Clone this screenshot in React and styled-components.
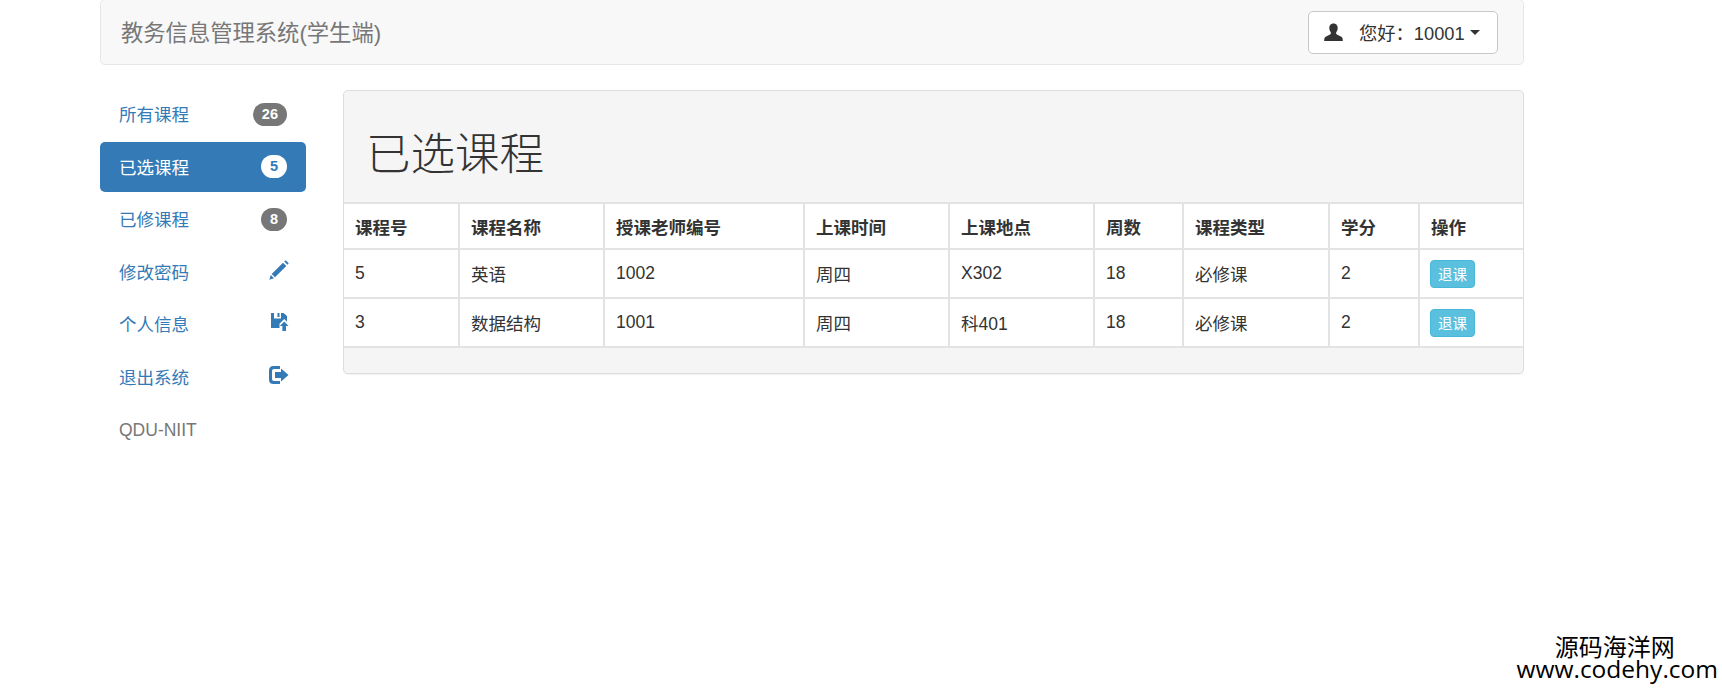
import React from "react";
import styled, { createGlobalStyle } from "styled-components";

const GlobalStyle = createGlobalStyle`
    html, body {
        margin: 0;
        padding: 0;
        background: #fff;
    }
    body {
        font-family: "Liberation Sans", "Noto Sans CJK SC", sans-serif;
        font-size: 17.5px;
        color: #333;
    }
`;

const columns = [
    { title: "课程号", width: 115 },
    { title: "课程名称", width: 145 },
    { title: "授课老师编号", width: 200 },
    { title: "上课时间", width: 145 },
    { title: "上课地点", width: 145 },
    { title: "周数", width: 89 },
    { title: "课程类型", width: 146 },
    { title: "学分", width: 90 },
    { title: "操作" },
];

const courses = [
    ["5", "英语", "1002", "周四", "X302", "18", "必修课", "2"],
    ["3", "数据结构", "1001", "周四", "科401", "18", "必修课", "2"],
];

const UserIcon = () => (
    <svg width="19" height="19" viewBox="0 0 19 19" fill="#333">
        <path d="M9.5 0.5c2.9 0 4.4 2.2 4.2 5-.1 1.500-.6 2.700-1.300 3.600-.5.7-.4 1.800.4 2.300 1 .6 4.200 1.700 5.200 2.900.6.8.8 2.200.8 3.700H.2c0-1.500.2-2.900.8-3.700 1-1.200 4.200-2.300 5.200-2.900.8-.5.9-1.600.4-2.300C5.900 8.200 5.400 7 5.300 5.500c-.2-2.800 1.300-5 4.200-5z" />
    </svg>
);

const PencilIcon = () => (
    <svg width="20" height="20" viewBox="0 0 20 20" fill="#337ab7">
        <path d="M15.200 1.500l1.500-1.200 3 3-1.200 1.500zM14 2.700l3.300 3.300L6 17.300 2.700 14zM1.800 15l3.200 3.200L0.300 19.700z" />
    </svg>
);

const FloppyOpenIcon = () => (
    <svg width="18" height="18" viewBox="0 0 18 18" fill="#337ab7">
        <path d="M0 0h3v5.500h7V0h2.500L16 3v5.800l-2.800-2.900-4.700 4.800v4.300H0zM6.500 0h2v4h-2z" />
        <path d="M13.200 8.600l4.300 4.400h-2.500v5h-3.600v-5H8.900z" />
    </svg>
);

const LogOutIcon = () => (
    <svg width="20" height="18" viewBox="0 0 20 18" fill="#337ab7">
        <path d="M4.500 0H11v3H5Q3 3 3 5v8q0 2 2 2h6v3H4.500Q0 18 0 13.500v-9Q0 0 4.500 0z" />
        <path d="M6 6h6V2.500L19.500 9 12 15.500V12H6z" />
    </svg>
);

const menu = [
    { label: "所有课程", badge: "26" },
    { label: "已选课程", badge: "5", active: true },
    { label: "已修课程", badge: "8" },
    { label: "修改密码", icon: <PencilIcon /> },
    { label: "个人信息", icon: <FloppyOpenIcon /> },
    { label: "退出系统", icon: <LogOutIcon /> },
];

const App = () => (
    <Page>
        <GlobalStyle />
        <Navbar>
            <Brand>教务信息管理系统(学生端)</Brand>
            <UserButton>
                <UserIcon />
                <span>您好：10001</span>
                <Caret />
            </UserButton>
        </Navbar>
        <Main>
            <Sidebar>
                {menu.map((item) => (
                    <Pill key={item.label} $active={item.active}>
                        <PillLabel>{item.label}</PillLabel>
                        {item.badge && <Badge $active={item.active}>{item.badge}</Badge>}
                        {item.icon && <PillIcon>{item.icon}</PillIcon>}
                    </Pill>
                ))}
                <SideNote>QDU-NIIT</SideNote>
            </Sidebar>
            <Panel>
                <PanelHeading>已选课程</PanelHeading>
                <Table>
                    <colgroup>
                        {columns.map((col) => (
                            <col key={col.title} width={col.width} />
                        ))}
                    </colgroup>
                    <thead>
                        <tr>
                            {columns.map((col) => (
                                <HeadCell key={col.title}>{col.title}</HeadCell>
                            ))}
                        </tr>
                    </thead>
                    <tbody>
                        {courses.map((row) => (
                            <tr key={row[0]}>
                                {row.map((value, i) => (
                                    <Cell key={i}>{value}</Cell>
                                ))}
                                <Cell>
                                    <DropButton>退课</DropButton>
                                </Cell>
                            </tr>
                        ))}
                    </tbody>
                </Table>
                <PanelFooter />
            </Panel>
        </Main>
        <Watermark>
            <WatermarkName>源码海洋网</WatermarkName>
            <WatermarkUrl>www.codehy.com</WatermarkUrl>
        </Watermark>
    </Page>
);

const Page = styled.div`
    position: relative;
    box-sizing: border-box;
    width: 1722px;
    height: 689px;
    padding-left: 100px;
    overflow: hidden;
`;

const Navbar = styled.nav`
    box-sizing: border-box;
    display: flex;
    align-items: center;
    justify-content: space-between;
    width: 1424px;
    height: 66px;
    margin-top: -1px;
    padding: 0 25px 0 20px;
    background: #f8f8f8;
    border: 1px solid #e7e7e7;
    border-radius: 5px;
`;

const Brand = styled.div`
    margin-top: -2px;
    font-size: 22.3px;
    color: #777;
`;

const UserButton = styled.button`
    box-sizing: border-box;
    display: flex;
    align-items: center;
    width: 190px;
    height: 43px;
    margin-top: 1px;
    padding: 0 15px;
    background: #fff;
    border: 1px solid #c8c8c8;
    border-radius: 5px;
    color: #333;
    font-family: inherit;
    font-size: 18.3px;
    white-space: nowrap;

    span {
        margin: -1px 0 0 16px;
    }
`;

const Caret = styled.i`
    width: 0;
    height: 0;
    margin-left: 5px;
    border-top: 5px solid #333;
    border-left: 5px solid transparent;
    border-right: 5px solid transparent;
`;

const Main = styled.div`
    display: flex;
    align-items: flex-start;
    margin-top: 25px;
`;

const Sidebar = styled.ul`
    display: flex;
    flex-direction: column;
    gap: 2px;
    flex: none;
    width: 206px;
    margin: -1px 37px 0 0;
    padding: 0;
    list-style: none;
`;

const Pill = styled.li`
    box-sizing: border-box;
    display: flex;
    align-items: center;
    justify-content: space-between;
    height: 50.5px;
    padding: 0 19px;
    border-radius: 5px;
    background: ${(props) => (props.$active ? "#337ab7" : "transparent")};
    color: ${(props) => (props.$active ? "#fff" : "#337ab7")};
`;

const PillLabel = styled.span`
    margin-top: -1px;
`;

const Badge = styled.span`
    box-sizing: border-box;
    min-width: 26px;
    height: 23px;
    padding: 0 9px;
    border-radius: 12px;
    background: ${(props) => (props.$active ? "#fff" : "#777")};
    color: ${(props) => (props.$active ? "#337ab7" : "#fff")};
    font-size: 14.5px;
    font-weight: bold;
    line-height: 23px;
    text-align: center;
`;

const PillIcon = styled.span`
    display: flex;
    margin: -4px -2px 0 0;
`;

const SideNote = styled.li`
    display: flex;
    align-items: center;
    height: 50.5px;
    margin-top: 1px;
    padding-left: 19px;
    color: #777;
`;

const Panel = styled.section`
    box-sizing: border-box;
    width: 1181px;
    background: #f5f5f5;
    border: 1px solid #ddd;
    border-radius: 5px;
    box-shadow: 0 1px 1px rgba(0, 0, 0, 0.05);
`;

const PanelHeading = styled.h1`
    box-sizing: border-box;
    display: flex;
    align-items: center;
    height: 111px;
    margin: 0;
    padding: 8px 0 0 22px;
    color: #333;
    font-size: 44.5px;
    font-weight: 300;
`;

const Table = styled.table`
    box-sizing: border-box;
    width: 100%;
    background: #fff;
    border-collapse: collapse;
    table-layout: fixed;
`;

const HeadCell = styled.th`
    box-sizing: border-box;
    height: 46px;
    padding: 0 11px;
    border: 2px solid #e3e3e3;
    font-weight: bold;
    text-align: left;

    &:first-child {
        border-left: 0;
    }
    &:last-child {
        border-right: 0;
    }
`;

const Cell = styled.td`
    box-sizing: border-box;
    height: 49px;
    padding: 0 11px;
    border: 2px solid #e3e3e3;
    white-space: nowrap;

    &:first-child {
        border-left: 0;
    }
    &:last-child {
        border-right: 0;
        padding-left: 10px;
    }
`;

const DropButton = styled.button`
    display: block;
    box-sizing: border-box;
    width: 45px;
    height: 28px;
    padding: 0;
    background: #5bc0de;
    border: 1px solid #46b8da;
    border-radius: 4px;
    color: #fff;
    font-family: inherit;
    font-size: 14.5px;
`;

const PanelFooter = styled.div`
    height: 25px;
`;

const Watermark = styled.div`
    position: absolute;
    right: 4px;
    bottom: 9px;
    color: #000;
    font-family: "Open Sans", "Noto Sans CJK SC", sans-serif;
    font-size: 24px;
    line-height: 22px;
    text-align: center;
`;

const WatermarkName = styled.div`
    padding-right: 5px;
`;

const WatermarkUrl = styled.div`
    font-size: 24.5px;
`;

export default App;
